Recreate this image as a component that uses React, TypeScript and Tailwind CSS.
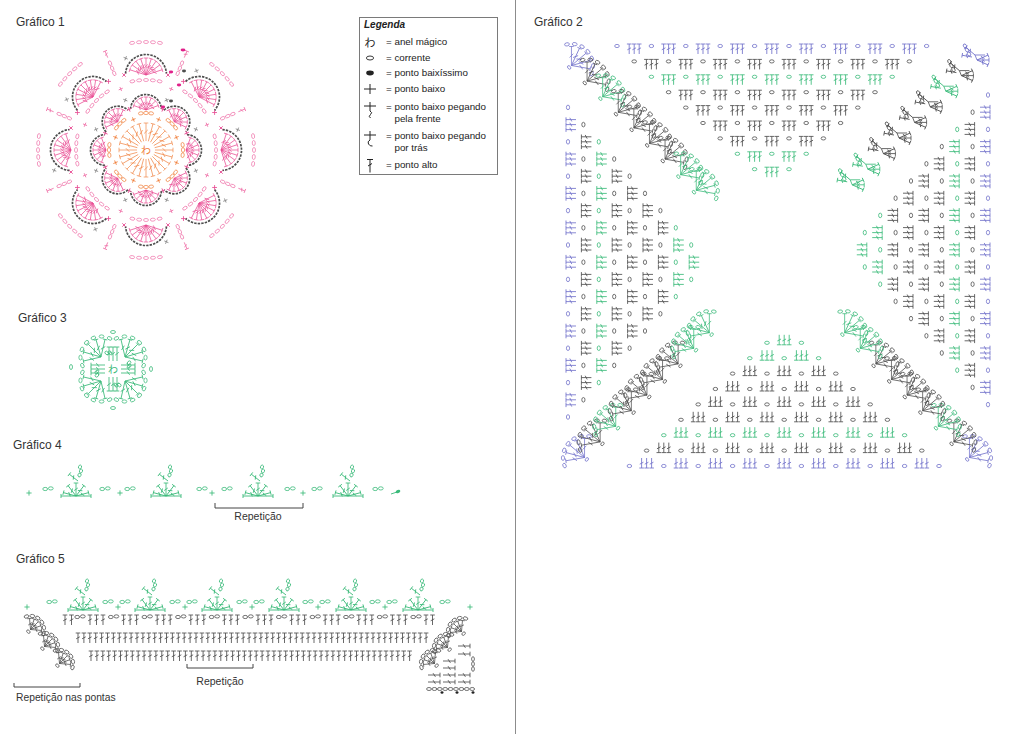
import React from 'react';

const ORANGE = '#f0803c';
const PINK = '#e94c93';
const LPINK = '#f07aae';
const DARK = '#4e4e4e';
const GRAY = '#8d8d8d';
const GREEN = '#3bba7a';
const BLUE = '#7373cb';
const SANS = '"Liberation Sans", Arial, sans-serif';
const CJK = '"Noto Sans CJK JP", sans-serif';

const rad = (a: number) => (a * Math.PI) / 180;
const px = (x: number, r: number, a: number) => x + r * Math.cos(rad(a));
const py = (y: number, r: number, a: number) => y + r * Math.sin(rad(a));

type Sym = { x: number; y: number; c: string; r?: number };

// ponto alto: base at (x,y), pointing up, then rotated
function Dc({ x, y, c, r = 0, h = 10, w = 0.85 }: Sym & { h?: number; w?: number }) {
  const b = Math.min(2.3, h * 0.22 + 0.6);
  return (
    <path
      transform={`translate(${x} ${y}) rotate(${r})`}
      d={`M0 0V${-h}M${-b} ${-h}H${b}M${-b * 0.8} ${-h * 0.42}L${b * 0.8} ${-h * 0.62}`}
      stroke={c}
      strokeWidth={w}
      fill="none"
    />
  );
}

// corrente
function Ch({ x, y, c, r = 0, rx = 2.5, ry = 1.5, w = 0.8 }: Sym & { rx?: number; ry?: number; w?: number }) {
  return (
    <ellipse cx={x} cy={y} rx={rx} ry={ry} transform={`rotate(${r} ${x} ${y})`} fill="none" stroke={c} strokeWidth={w} />
  );
}

// ponto baixo
function Sc({ x, y, c, r = 0, s = 2.6 }: Sym & { s?: number }) {
  return (
    <path transform={`translate(${x} ${y}) rotate(${r})`} d={`M${-s} 0H${s}M0 ${-s}V${s}`} stroke={c} strokeWidth={0.85} fill="none" />
  );
}

type FanProps = {
  x: number;
  y: number;
  dir: number;
  c: string;
  n?: number;
  len?: number;
  spread?: number;
  loops?: number;
  loopR?: number;
  arcR?: number;
  arcSpan?: number;
  w?: number;
};

function Fan({ x, y, dir, c, n = 5, len = 12, spread = 60, loops = 0, loopR = 13, arcR = 0, arcSpan = 85, w = 0.85 }: FanProps) {
  const els: React.ReactNode[] = [];
  for (let i = 0; i < n; i++) {
    const a = dir - spread + (2 * spread * i) / (n - 1);
    els.push(<Dc key={'s' + i} x={x} y={y} h={len} r={a + 90} c={c} w={w} />);
  }
  for (let i = 0; i < loops; i++) {
    const a = dir - spread - 12 + ((2 * spread + 24) * i) / (loops - 1);
    els.push(<Ch key={'l' + i} x={px(x, loopR, a)} y={py(y, loopR, a)} r={a + 90} c={c} rx={2.4} ry={1.6} w={0.75} />);
  }
  if (arcR) {
    const a0 = dir - arcSpan;
    const a1 = dir + arcSpan;
    els.push(
      <path
        key="arc"
        d={`M${px(x, arcR, a0)} ${py(y, arcR, a0)}A${arcR} ${arcR} 0 ${a1 - a0 > 180 ? 1 : 0} 1 ${px(x, arcR, a1)} ${py(y, arcR, a1)}`}
        fill="none"
        stroke={DARK}
        strokeWidth={1.7}
        strokeDasharray="2.4 1.1"
      />
    );
  }
  return <g>{els}</g>;
}

// concha: leque com correntes em volta, (x,y) é o meio da concha
function Shell({ x, y, dir, c, len = 15, spread = 55, loops = 8 }: Sym & { dir: number; len?: number; spread?: number; loops?: number }) {
  const ax = px(x, -len * 0.45, dir);
  const ay = py(y, -len * 0.45, dir);
  return (
    <g>
      <Fan x={ax} y={ay} dir={dir} c={c} n={5} len={len} spread={spread} loops={loops} loopR={len + 2.6} w={0.75} />
      <Ch x={px(ax, 3, dir + 180)} y={py(ay, 3, dir + 180)} r={dir + 90} c={c} rx={2} ry={1.4} w={0.75} />
    </g>
  );
}

// leque com picô (gráficos 4 e 5)
function TopFan({ x, y, c }: Sym) {
  const els: React.ReactNode[] = [];
  [-165, -127.5, -90, -52.5, -15].forEach((a, i) => els.push(<Dc key={i} x={x} y={y} h={13} r={a + 90} c={c} />));
  return (
    <g>
      {els}
      <path d={`M${x - 15} ${y}H${x + 15}M${x - 15} ${y - 2}V${y + 2}M${x + 15} ${y - 2}V${y + 2}`} stroke={c} strokeWidth={0.9} />
      <Dc x={x + 2} y={y - 15} h={11} r={-52} c={c} />
      <Ch x={x + 4} y={y - 29} r={-70} c={c} rx={2} ry={1.5} />
      <Ch x={x + 5} y={y - 25} r={-70} c={c} rx={2} ry={1.5} />
      <Ch x={x + 3.5} y={y - 21} r={-70} c={c} rx={2} ry={1.5} />
    </g>
  );
}

const wrap = (els: React.ReactNode[]) => els.map((e, i) => <React.Fragment key={i}>{e}</React.Fragment>);

function Chart1() {
  const X = 146;
  const Y = 150;
  const els: React.ReactNode[] = [];
  for (let i = 0; i < 24; i++) {
    const a = 15 * i;
    els.push(<Dc x={px(X, 9, a)} y={py(Y, 9, a)} h={18} r={a + 90} c={ORANGE} w={0.65} />);
  }
  for (let k = 0; k < 8; k++) {
    const a = 45 * k - 90;
    const m = a + 22.5;
    [-8, 0, 8].forEach((t) =>
      els.push(<Ch x={px(X, 37, a + t)} y={py(Y, 37, a + t)} r={a + t + 90} c={ORANGE} rx={2.4} ry={1.6} w={0.7} />)
    );
    els.push(<Sc x={px(X, 33, m)} y={py(Y, 33, m)} r={m} c={ORANGE} s={2.3} />);
    const ax = px(X, 40, a);
    const ay = py(Y, 40, a);
    els.push(<Fan x={ax} y={ay} dir={a} c={PINK} n={7} len={13} spread={70} arcR={15.5} arcSpan={86} w={0.7} />);
    els.push(<Sc x={px(X, 44, m)} y={py(Y, 44, m)} r={m} c={PINK} s={2.4} />);
    els.push(<Sc x={px(X, 54, m)} y={py(Y, 54, m)} r={m + 45} c={GRAY} s={2.2} />);
    for (let t = -2; t <= 2; t++)
      els.push(<Ch x={px(X, 70, a + t * 5.6)} y={py(Y, 70, a + t * 5.6)} r={a + t * 5.6 + 90} c={LPINK} w={0.75} />);
    const bx = px(X, 75, a);
    const by = py(Y, 75, a);
    els.push(<Fan x={bx} y={by} dir={a} c={PINK} n={9} len={17} spread={72} arcR={20.5} arcSpan={86} w={0.7} />);
    els.push(<Sc x={px(bx, 22, a - 90)} y={py(by, 22, a - 90)} r={a + 45} c={PINK} s={2.4} />);
    els.push(<Sc x={px(bx, 22, a + 90)} y={py(by, 22, a + 90)} r={a + 45} c={PINK} s={2.4} />);
    for (let t = -2; t <= 2; t++)
      els.push(<Ch x={px(X, 108, a + t * 3.7)} y={py(Y, 108, a + t * 3.7)} r={a + t * 3.7 + 90} c={LPINK} w={0.75} />);
    [0, 1, 2].forEach((t) =>
      els.push(<Ch x={px(X, 83 + t * 5.5, m)} y={py(Y, 83 + t * 5.5, m)} r={m} c={LPINK} rx={2.4} ry={1.5} w={0.75} />)
    );
    els.push(<Dc x={px(X, 100, m)} y={py(Y, 100, m)} h={7} r={m + 90} c={LPINK} />);
    els.push(<Sc x={px(X, 94, m + 10)} y={py(Y, 94, m + 10)} r={m + 45} c={GRAY} s={2.2} />);
    els.push(<Sc x={px(X, 66, m)} y={py(Y, 66, m)} r={m} c={LPINK} s={2.2} />);
  }
  return (
    <g>
      {wrap(els)}
      <text x={X} y={Y + 4} textAnchor="middle" fontSize={10} fill={ORANGE} fontFamily={CJK}>
        わ
      </text>
      <ellipse cx={183} cy={50} rx={2.4} ry={1.4} fill="#e0208a" />
      <ellipse cx={171} cy={72} rx={2.2} ry={1.4} fill="#e0208a" />
      <ellipse cx={179} cy={85} rx={2.2} ry={1.4} fill="#e0208a" />
      <ellipse cx={163} cy={107} rx={2.2} ry={1.4} fill="#e0208a" />
      <ellipse cx={184} cy={71} rx={2} ry={1.4} fill={DARK} />
      <ellipse cx={171} cy={101} rx={2} ry={1.4} fill={DARK} />
    </g>
  );
}

const rowC = [BLUE, DARK, GREEN, DARK, DARK, DARK, DARK, GREEN, GREEN];

function Chart2() {
  const tri: React.ReactNode[] = [];
  for (let k = 0; k < 9; k++) {
    const top = -212 + 15.4 * k;
    const x0 = -161 + 17.2 * k;
    const c = rowC[k];
    for (let j = 0; j <= 9 - k; j++) {
      tri.push(<Ch x={x0 + 34.4 * j} y={top + 2} c={c} rx={2.3} ry={1.6} />);
      if (j < 9 - k)
        for (let s = -1; s <= 1; s++) tri.push(<Dc x={x0 + 34.4 * j + 17.2 + s * 5} y={top + 10} h={10} c={c} />);
    }
  }
  const fans: React.ReactNode[] = [];
  for (let k = 0; k < 9; k++) {
    const c = rowC[k];
    const d = 15.6 * k;
    // superior esquerdo
    fans.push(<Shell x={578 + d} y={60 + d} dir={-40} c={c} len={19} spread={50} loops={7} />);
    // inferior esquerdo
    fans.push(<Shell x={578 + d} y={452 - d} dir={-140} c={c} len={19} spread={50} loops={7} />);
    // inferior direito
    fans.push(<Shell x={976 - d} y={452 - d} dir={-40} c={c} len={19} spread={50} loops={7} />);
  }
  const alt: React.ReactNode[] = [];
  for (let k = 0; k < 9; k++) {
    const x = 980 - 15.6 * k;
    const y = 54 + 15.6 * k;
    const c = rowC[k];
    [-24, 0, 24].forEach((a) => alt.push(<Dc x={x - 3} y={y + 6} h={12} r={a + 90} c={c} />));
    alt.push(<Dc x={x - 5} y={y + 1} h={12} r={-50} c={c} />);
    alt.push(<Dc x={x - 8} y={y + 3} h={10} r={-80} c={c} />);
    alt.push(<path d={`M${x - 3} ${y + 6}L${x - 5} ${y + 1}H${x + 5}`} stroke={c} strokeWidth={0.85} fill="none" />);
    alt.push(<Ch x={x - 13} y={y - 4} r={60} c={c} rx={2.2} ry={1.5} />);
    alt.push(<Ch x={x - 11} y={y} r={60} c={c} rx={2.2} ry={1.5} />);
    alt.push(<Ch x={x - 15} y={y - 8} r={60} c={c} rx={2.2} ry={1.5} />);
  }
  return (
    <g>
      {[0, -90, 180, 90].map((rot) => (
        <g key={'t' + rot} transform={`translate(778 256) rotate(${rot})`}>
          {wrap(tri)}
        </g>
      ))}
      {wrap(fans)}
      {wrap(alt)}
    </g>
  );
}

function Chart3() {
  const X = 113;
  const Y = 369;
  const els: React.ReactNode[] = [];
  [-90, 0, 90, 180].forEach((d) => {
    [-4, 0, 4].forEach((s) => {
      const bx = px(X, 8, d) + s * -Math.sin(rad(d));
      const by = py(Y, 8, d) + s * Math.cos(rad(d));
      els.push(<Dc x={bx} y={by} h={14} r={d + 90} c={GREEN} />);
    });
  });
  [
    [113, 332, 0],
    [71, 367, 90],
    [151, 369, 90],
    [113, 408, 0],
  ].forEach(([x, y, r]) => els.push(<Ch x={x} y={y} r={r} c={GREEN} />));
  [-135, -45, 45, 135].forEach((d) => {
    const ax = px(X, 17, d);
    const ay = py(Y, 17, d);
    els.push(<Fan x={ax} y={ay} dir={d} c={GREEN} n={5} len={18} spread={58} loops={7} loopR={20.5} w={0.8} />);
    els.push(<Ch x={px(ax, 7, d + 100)} y={py(ay, 7, d + 100)} r={d} c={GREEN} rx={2} ry={1.5} />);
    els.push(<Ch x={px(ax, 10, d + 110)} y={py(ay, 10, d + 110)} r={d} c={GREEN} rx={2} ry={1.5} />);
  });
  return (
    <g>
      {wrap(els)}
      <text x={X} y={Y + 4} textAnchor="middle" fontSize={10} fill={GREEN} fontFamily={CJK}>
        わ
      </text>
    </g>
  );
}

function Pair({ x, y, c }: Sym) {
  return (
    <g>
      <Ch x={x - 2.8} y={y} c={c} rx={2.4} ry={1.6} />
      <Ch x={x + 2.8} y={y - 0.6} c={c} rx={2.4} ry={1.6} />
    </g>
  );
}

function Chart4() {
  const els: React.ReactNode[] = [];
  [29, 120, 212, 303].forEach((x) => els.push(<Sc x={x} y={493} c={GREEN} />));
  [48, 105, 130, 202, 227, 290, 317, 378].forEach((x) => els.push(<Pair x={x} y={489} c={GREEN} />));
  [76, 166, 258, 348].forEach((x) => els.push(<TopFan x={x} y={496} c={GREEN} />));
  return (
    <g>
      {wrap(els)}
      <path d="M391 494L397 492" stroke={GREEN} strokeWidth={0.9} />
      <ellipse cx={398} cy={491.5} rx={2.4} ry={1.5} fill={GREEN} transform="rotate(-20 398 491.5)" />
      <path d="M215 503V508H303V503" stroke="#444" strokeWidth={1} fill="none" />
      <text x={258} y={520} textAnchor="middle" fontSize={10.5} fill="#333" fontFamily={SANS}>
        Repetição
      </text>
    </g>
  );
}

function Chart5() {
  const els: React.ReactNode[] = [];
  [83, 150, 217, 284, 351, 418].forEach((x) => els.push(<TopFan x={x} y={610} c={GREEN} />));
  [27, 118, 185, 252, 318, 385, 470].forEach((x) => els.push(<Sc x={x} y={607} c={GREEN} />));
  [52, 108, 125, 175, 192, 242, 259, 308, 325, 375, 392, 445].forEach((x) => els.push(<Pair x={x} y={602} c={GREEN} />));
  // carreira A
  [65, 71.5].forEach((x) => els.push(<Dc x={x} y={625} h={10} c={DARK} />));
  for (let g = 0; g <= 10; g++) {
    const x = 80 + 33.6 * g;
    els.push(<Pair x={x} y={617} c={DARK} />);
    const dcs = g === 10 ? [0, 6.5] : [0, 6.5, 13];
    dcs.forEach((o) => els.push(<Dc x={x + 10 + o} y={625} h={10} c={DARK} />));
  }
  for (let i = 0; i < 60; i++) els.push(<Dc x={78 + 5.9 * i} y={643} h={10} c={DARK} />);
  for (let i = 0; i < 55; i++) els.push(<Dc x={91 + 5.9 * i} y={661} h={10} c={DARK} />);
  // pontas
  [
    [34, 626],
    [48, 643],
    [63, 660],
  ].forEach(([x, y]) => els.push(<Shell x={x} y={y} dir={-45} c={DARK} len={11} spread={50} loops={6} />));
  [
    [458, 628],
    [444, 644],
    [431, 660],
  ].forEach(([x, y]) => els.push(<Shell x={x} y={y} dir={-135} c={DARK} len={11} spread={50} loops={6} />));
  [
    [458, 646],
    [458, 654],
    [443, 661],
    [443, 668],
    [428, 675],
    [443, 675],
    [458, 675],
    [428, 682],
    [443, 682],
    [458, 682],
  ].forEach(([x, y]) => els.push(<Dc x={x} y={y} h={12} r={90} c={DARK} />));
  [659, 664, 669].forEach((y) => els.push(<Ch x={473} y={y} r={90} c={DARK} rx={2.3} ry={1.4} />));
  for (let i = 0; i < 9; i++) els.push(<Ch x={429 + 5.4 * i} y={689} c={DARK} rx={2.4} ry={1.5} />);
  [442, 457, 473].forEach((x) => els.push(<ellipse cx={x} cy={692.5} rx={1.5} ry={1.3} fill="#222" />));
  return (
    <g>
      {wrap(els)}
      <path d="M14 683V687H80V683" stroke="#444" strokeWidth={1} fill="none" />
      <path d="M187 664V668H253V664" stroke="#444" strokeWidth={1} fill="none" />
      <text x={16} y={701} fontSize={10.3} fill="#333" fontFamily={SANS}>
        Repetição nas pontas
      </text>
      <text x={220} y={685} textAnchor="middle" fontSize={10.5} fill="#333" fontFamily={SANS}>
        Repetição
      </text>
    </g>
  );
}

function LegendRow({ sym, symH = 14, mt, children }: { sym: React.ReactNode; symH?: number; mt: string; children: React.ReactNode }) {
  return (
    <div className={`flex items-start ${mt}`}>
      <span className="w-[20px] shrink-0 flex justify-center items-center" style={{ height: symH }}>
        {sym}
      </span>
      <span className="ml-[6px] flex leading-[11.5px] pt-[1px]">
        <span>=&nbsp;</span>
        <span>{children}</span>
      </span>
    </div>
  );
}

function Legend() {
  const s = '#222';
  return (
    <div className="mt-[17px] ml-[9px] w-[139px] h-[158px] border border-[#7a7a7a] text-[9.8px] text-[#222]">
      <div className="pl-[4px] pt-[1px] h-[13px] leading-[12px] text-[10px] font-bold italic">Legenda</div>
      <LegendRow mt="mt-[4px]" sym={<span className="font-['Noto_Sans_CJK_JP',sans-serif] text-[11px] leading-[14px]">わ</span>}>
        anel mágico
      </LegendRow>
      <LegendRow
        mt="mt-[2px]"
        sym={
          <svg width="12" height="8">
            <ellipse cx="6" cy="4" rx="3.6" ry="2" fill="none" stroke={s} strokeWidth="0.9" />
          </svg>
        }
      >
        corrente
      </LegendRow>
      <LegendRow
        mt="mt-[1px]"
        sym={
          <svg width="12" height="8">
            <ellipse cx="6" cy="4" rx="3.8" ry="2.4" fill={s} />
          </svg>
        }
      >
        ponto baixíssimo
      </LegendRow>
      <LegendRow
        mt="mt-[2px]"
        sym={
          <svg width="14" height="12">
            <path d="M1 6H13M7 1V11" stroke={s} strokeWidth="1" />
          </svg>
        }
      >
        ponto baixo
      </LegendRow>
      <LegendRow
        mt="mt-[4px]"
        symH={20}
        sym={
          <svg width="14" height="18">
            <path d="M1 5H13M7 1V10Q10 11.5 7.5 13.5Q5 15.5 7.5 17" stroke={s} strokeWidth="1" fill="none" />
          </svg>
        }
      >
        ponto baixo pegando
        <br />
        pela frente
      </LegendRow>
      <LegendRow
        mt="mt-[5px]"
        symH={20}
        sym={
          <svg width="14" height="18">
            <path d="M1 5H13M7 1V10Q4 11.5 5.5 14Q7 16.5 9.5 16" stroke={s} strokeWidth="1" fill="none" />
          </svg>
        }
      >
        ponto baixo pegando
        <br />
        por trás
      </LegendRow>
      <LegendRow
        mt="mt-[5px]"
        sym={
          <svg width="12" height="15">
            <path d="M3 1.5H9M6 1.5V14.5M4 8L8 5.5" stroke={s} strokeWidth="1" fill="none" />
          </svg>
        }
      >
        ponto alto
      </LegendRow>
    </div>
  );
}

export default function App() {
  return (
    <div className="flex w-[1024px] h-[734px] bg-white text-[#333] font-['Liberation_Sans',Arial,sans-serif] overflow-hidden">
      <div className="w-[516px] shrink-0 border-r border-[#8c8c8c] flex flex-col">
        <section className="flex h-[300px]">
          <div className="w-[350px] shrink-0">
            <h2 className="pl-[16px] pt-[14px] text-[12px] leading-[16px]">Gráfico 1</h2>
            <svg width="350" height="240" viewBox="0 30 350 240" className="block">
              <Chart1 />
            </svg>
          </div>
          <Legend />
        </section>
        <section>
          <h2 className="pl-[18px] pt-[10px] text-[12px] leading-[16px]">Gráfico 3</h2>
          <svg width="515" height="94" viewBox="0 326 515 94" className="block">
            <Chart3 />
          </svg>
        </section>
        <section>
          <h2 className="pl-[13px] pt-[17px] text-[12px] leading-[16px]">Gráfico 4</h2>
          <svg width="515" height="77" viewBox="0 453 515 77" className="block">
            <Chart4 />
          </svg>
        </section>
        <section>
          <h2 className="pl-[16px] pt-[21px] text-[12px] leading-[16px]">Gráfico 5</h2>
          <svg width="515" height="143" viewBox="0 567 515 143" className="block">
            <Chart5 />
          </svg>
        </section>
      </div>
      <div className="flex-1">
        <h2 className="pl-[18px] pt-[14px] text-[12px] leading-[16px]">Gráfico 2</h2>
        <svg width="508" height="450" viewBox="516 30 508 450" className="block">
          <Chart2 />
        </svg>
      </div>
    </div>
  );
}
